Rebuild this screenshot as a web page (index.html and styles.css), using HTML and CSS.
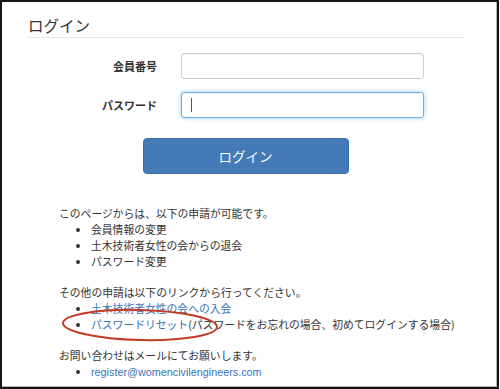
FILE: index.html
```html
<!DOCTYPE html>
<html lang="ja">
<head>
    <meta charset="UTF-8">
    <title>ログイン</title>
    <link rel="stylesheet" href="styles.css">
</head>
<body>
    <div class="frame">
        <div class="page">
            <h1 class="title">ログイン</h1>

            <!-- ログインフォーム -->
            <div class="login-form">
                <div class="form-row">
                    <span class="form-label">会員番号</span>
                    <div class="input"></div>
                </div>
                <div class="form-row">
                    <span class="form-label">パスワード</span>
                    <div class="input input-focus"><span class="caret"></span></div>
                </div>
                <div class="btn-login">ログイン</div>
            </div>

            <!-- 申請の案内 -->
            <div class="notes">
                <p>このページからは、以下の申請が可能です。</p>
                <ul>
                    <li>会員情報の変更</li>
                    <li>土木技術者女性の会からの退会</li>
                    <li>パスワード変更</li>
                </ul>
                <p>その他の申請は以下のリンクから行ってください。</p>
                <ul>
                    <li><a href="#">土木技術者女性の会への入会</a></li>
                    <li><a href="#">パスワードリセット</a>(パスワードをお忘れの場合、初めてログインする場合)</li>
                </ul>
                <p>お問い合わせはメールにてお願いします。</p>
                <ul>
                    <li><a href="#" class="mail">register@womencivilengineers.com</a></li>
                </ul>
            </div>
        </div>

        <!-- 赤丸の注記 -->
        <svg class="mark" width="500" height="389" viewBox="0 0 500 389">
            <ellipse cx="140" cy="325" rx="77" ry="15" transform="rotate(1.5 140 325)" fill="none" stroke="#c23a24" stroke-width="2"/>
        </svg>
    </div>
</body>
</html>
```

FILE: styles.css
```css
html, body {
    margin: 0;
    padding: 0;
    background: #fff;
}

body {
    font-family: "Noto Sans CJK JP", "Liberation Sans", sans-serif;
    color: #333;
}

.frame {
    position: relative;
    box-sizing: border-box;
    width: 499px;
    height: 389px;
    border: 2px solid #151515;
    box-shadow: inset -1px -1px 0 #b5b5b5;
    overflow: hidden;
}

.page {
    padding: 0 34px 0 26px;
}

.title {
    margin: 0;
    padding: 12px 0 1px 0;
    font-size: 15.5px;
    line-height: 22px;
    font-weight: normal;
    color: #333;
    border-bottom: 1px solid #e6e6e6;
}

.login-form {
    padding-top: 15px;
}

.form-row {
    display: grid;
    grid-template-columns: 129px 243px;
    column-gap: 24px;
    align-items: center;
    margin-bottom: 13px;
}

.form-label {
    text-align: right;
    font-size: 11px;
    font-weight: bold;
    color: #333;
}

.input {
    box-sizing: border-box;
    height: 26px;
    border: 1px solid #ccc;
    border-radius: 3px;
    background: #fff;
    box-shadow: inset 0 1px 1px rgba(0,0,0,0.06);
    display: flex;
    align-items: center;
    padding-left: 9px;
}

.input-focus {
    border-color: #66afe9;
    box-shadow: inset 0 1px 1px rgba(0,0,0,0.06), 0 0 5px rgba(102,175,233,0.6);
}

.caret {
    width: 1px;
    height: 14px;
    background: #555;
}

.btn-login {
    box-sizing: border-box;
    width: 206px;
    height: 36px;
    margin: 20px auto 0 auto;
    background: #437ab7;
    border: 1px solid #3d70a9;
    border-radius: 4px;
    color: #fff;
    font-size: 13.5px;
    display: flex;
    align-items: center;
    justify-content: center;
}

.notes {
    padding: 31px 0 0 31px;
    font-size: 10.8px;
    line-height: 16px;
}

.notes p {
    margin: 0;
}

.notes ul {
    margin: 0 0 15px 0;
    padding-left: 32px;
}

.notes li {
    white-space: nowrap;
}

.notes a {
    color: #3a72b5;
    text-decoration: none;
}

.notes .mail {
    font-family: "Liberation Sans", sans-serif;
}

.mark {
    position: absolute;
    left: -2px;
    top: -2px;
    pointer-events: none;
}
```
